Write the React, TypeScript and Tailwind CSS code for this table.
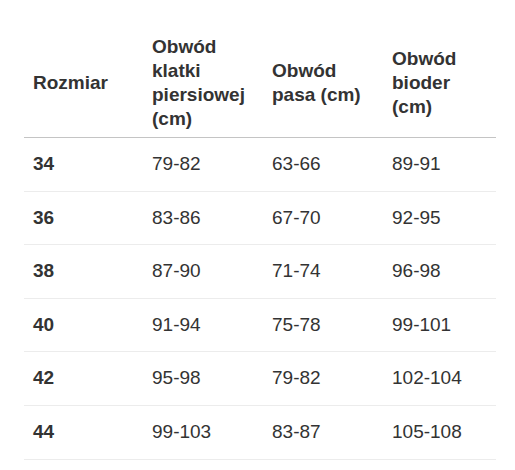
import React from "react";

const rows = [
  ["34", "79-82", "63-66", "89-91"],
  ["36", "83-86", "67-70", "92-95"],
  ["38", "87-90", "71-74", "96-98"],
  ["40", "91-94", "75-78", "99-101"],
  ["42", "95-98", "79-82", "102-104"],
  ["44", "99-103", "83-87", "105-108"],
];

export default function App() {
  return (
    <div
      className="w-[515px] h-[470px] bg-white overflow-hidden pt-[27px] pl-[24px]"
      style={{ fontFamily: '"Liberation Sans", Arial, sans-serif' }}
    >
      <table className="border-collapse text-[19px] text-[#333] table-fixed w-[472px]">
        <colgroup>
          <col className="w-[119px]" />
          <col className="w-[120px]" />
          <col className="w-[120px]" />
          <col className="w-[113px]" />
        </colgroup>
        <thead>
          <tr>
            {["Rozmiar", "Obwód klatki piersiowej (cm)", "Obwód pasa (cm)", "Obwód bioder (cm)"].map((h) => (
              <th
                key={h}
                className="text-left align-middle font-bold leading-[24px] pt-[8px] pb-[6px] px-[9px] border-b border-[#c4c4c4]"
              >
                {h}
              </th>
            ))}
          </tr>
        </thead>
        <tbody>
          {rows.map((r) => (
            <tr key={r[0]}>
              {r.map((c, i) => (
                <td
                  key={i}
                  className={`text-left align-middle leading-[24.6px] pt-[14px] pb-[14px] px-[9px] border-b border-[#ececec] ${
                    i === 0 ? "font-bold" : "font-normal"
                  }`}
                >
                  {c}
                </td>
              ))}
            </tr>
          ))}
        </tbody>
      </table>
    </div>
  );
}
